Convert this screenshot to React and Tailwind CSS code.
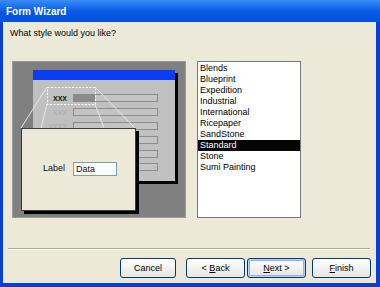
const STYLES = [
  'Blends',
  'Blueprint',
  'Expedition',
  'Industrial',
  'International',
  'Ricepaper',
  'SandStone',
  'Standard',
  'Stone',
  'Sumi Painting',
]

const FIELD_ROWS = [33, 47, 61, 75, 89, 102]

function Preview() {
  // miniature of the form style, drawn as a picture
  return (
    <svg width="174" height="157" viewBox="0 0 174 157" className="block shrink-0">
      <rect x="0" y="0" width="174" height="157" fill="#808080" />
      <rect x="0.5" y="0.5" width="173" height="156" fill="none" stroke="#9a9a9a" />
      {/* form window */}
      <rect x="24" y="12" width="142" height="111" fill="#000" />
      <rect x="21" y="9" width="142" height="111" fill="#c0c0c0" />
      <rect x="21" y="9" width="142" height="10" fill="#0a3cf0" />
      {FIELD_ROWS.map(y => (
        <rect key={y} x="61.5" y={y + 0.5} width="84" height="7" fill="#c4c4c4" stroke="#8c8c8c" />
      ))}
      <rect x="61" y="33" width="22" height="8" fill="#8a8a8a" />
      <text x="55" y="40" textAnchor="end" fontSize="7" fontWeight="700" fill="#111" fontFamily="Liberation Sans, Arial, sans-serif">XXX</text>
      <text x="55" y="54" textAnchor="end" fontSize="7" fill="#a8a8a8" fontFamily="Liberation Sans, Arial, sans-serif">XXX</text>
      <text x="55" y="68" textAnchor="end" fontSize="7" fill="#a8a8a8" fontFamily="Liberation Sans, Arial, sans-serif">XXXX</text>
      {/* zoom lines */}
      <g stroke="#e6e6e6" strokeWidth="1">
        <line x1="35" y1="26" x2="9" y2="67" />
        <line x1="35" y1="43" x2="9" y2="149" />
        <line x1="83" y1="26" x2="123" y2="67" />
        <line x1="83" y1="43" x2="123" y2="149" />
      </g>
      <rect x="35.5" y="26.5" width="48" height="17" fill="none" stroke="#fff" strokeDasharray="2 1.5" />
      {/* magnified control */}
      <rect x="12" y="70" width="115" height="83" fill="#000" />
      <rect x="9.5" y="67.5" width="114" height="82" fill="#ece9d8" stroke="#3a3a3a" />
      <text x="31" y="110" fontSize="9" fill="#111" fontFamily="Liberation Sans, Arial, sans-serif">Label</text>
      <rect x="61.5" y="101.5" width="43" height="13" fill="#fff" stroke="#7f9db9" />
      <text x="64" y="111" fontSize="9" fill="#111" fontFamily="Liberation Sans, Arial, sans-serif">Data</text>
    </svg>
  )
}

function WizButton({ children, focused, narrow }) {
  return (
    <button
      type="button"
      className={
        'h-[20px] rounded-[3px] border border-[#003c74] bg-gradient-to-b from-white to-[#e6e5de] text-[9px] leading-none text-black ' +
        (narrow ? 'w-[56px] ' : 'w-[59px] ') +
        (focused ? 'shadow-[inset_0_0_0_1px_#b9d1f9,inset_0_0_0_2px_#90b4f0]' : '')
      }
    >
      {children}
    </button>
  )
}

export default function App() {
  return (
    <div
      className="flex h-[287px] w-[380px] flex-col overflow-hidden bg-[#0a3fd6] text-[9px] text-black"
      style={{ fontFamily: '"Liberation Sans", Arial, sans-serif' }}
    >
      {/* Title bar */}
      <div className="flex h-[22px] shrink-0 items-center bg-gradient-to-b from-[#3b8cf7] via-[#0a5ae8] to-[#0350de] pl-[6px] pt-[1px] text-[10px] font-bold text-white">
        Form Wizard
      </div>

      {/* Client area */}
      <div className="mb-[4px] ml-[3px] mr-[4px] flex flex-1 flex-col bg-[#ece9d8]">
        <p className="pl-[7px] pt-[6px] leading-[11px]">What style would you like?</p>

        <div className="mt-[22px] flex gap-[11px] pl-[9px]">
          <Preview />
          <div className="h-[157px] w-[104px] border border-[#7a7a7a] bg-white pt-[1px] leading-[11px]">
            {STYLES.map(s => (
              <div
                key={s}
                className={'h-[11px] pl-[2px] ' + (s === 'Standard' ? 'bg-[#050505] text-white' : '')}
              >
                {s}
              </div>
            ))}
          </div>
        </div>

        <div className="ml-[5px] mr-[6px] mt-[30px] h-[2px] border-b border-t border-b-white border-t-[#aca899]" />

        <div className="mt-[8px] flex justify-end pr-[5px]">
          <WizButton narrow>Cancel</WizButton>
          <div className="ml-[10px]">
            <WizButton>
              &lt; <span className="underline">B</span>ack
            </WizButton>
          </div>
          <div className="ml-[2px]">
            <WizButton focused>
              <span className="underline">N</span>ext &gt;
            </WizButton>
          </div>
          <div className="ml-[6px]">
            <WizButton>
              <span className="underline">F</span>inish
            </WizButton>
          </div>
        </div>
      </div>
    </div>
  )
}
